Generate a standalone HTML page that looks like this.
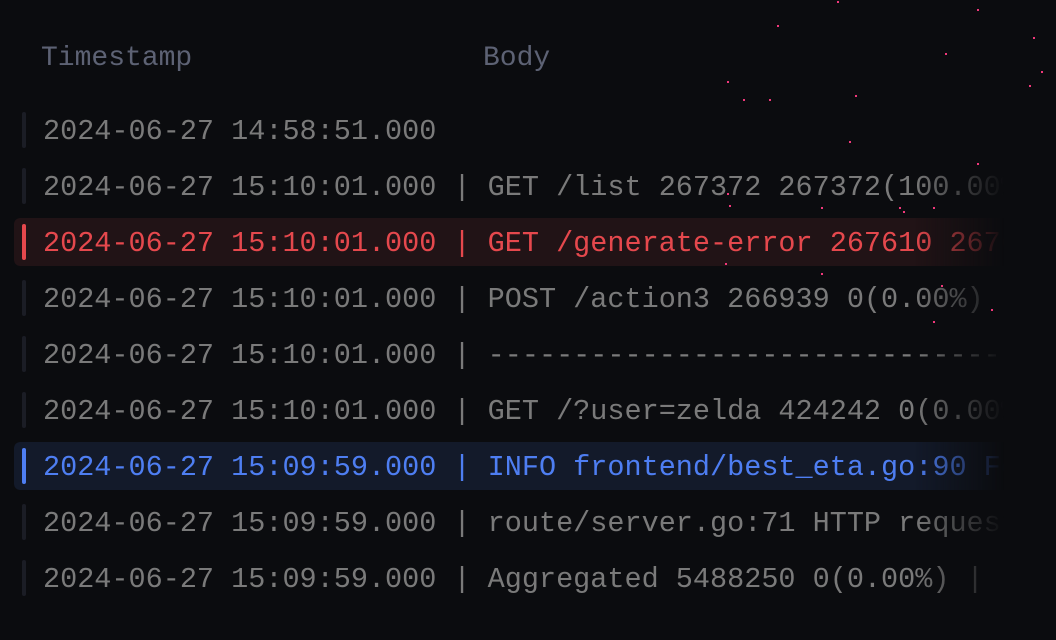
<!DOCTYPE html>
<html><head><meta charset="utf-8"><style>
html,body{margin:0;padding:0;background:#0b0c0f;width:1056px;height:640px;overflow:hidden}
body{position:relative;font-family:"Liberation Mono",monospace;font-size:28.5px}
.h{position:absolute;top:40px;color:#5d6274;line-height:38px;font-size:28px}
.row{position:absolute;left:14px;width:1000px;height:48px;border-radius:6px;
 -webkit-mask-image:linear-gradient(to right,#000 0,#000 900px,transparent 990px);mask-image:linear-gradient(to right,#000 0,#000 900px,transparent 990px)}
.row .bar{position:absolute;left:8px;top:6px;width:4px;height:36px;border-radius:2px;background:#1b1d25}
.row .t{position:absolute;left:29px;top:2px;line-height:48px;white-space:pre;color:#7a7a7a}
.r{background:#211316}.r .bar{background:#e5484d}.r .t{color:#e5484d}
.b{background:#131a2a}.b .bar{background:#4e7ef2}.b .t{color:#4e7ef2}
.d{position:absolute;width:2px;height:2px;background:#f0387a}
</style></head><body>
<div class="h" style="left:41px">Timestamp</div>
<div class="h" style="left:483px">Body</div>
<div class="row" style="top:106px"><div class="bar"></div><div class="t">2024-06-27 14:58:51.000</div></div>
<div class="row" style="top:162px"><div class="bar"></div><div class="t">2024-06-27 15:10:01.000 | GET /list 267372 267372(100.00%)</div></div>
<div class="row r" style="top:218px"><div class="bar"></div><div class="t">2024-06-27 15:10:01.000 | GET /generate-error 267610 267610</div></div>
<div class="row" style="top:274px"><div class="bar"></div><div class="t">2024-06-27 15:10:01.000 | POST /action3 266939 0(0.00%) |</div></div>
<div class="row" style="top:330px"><div class="bar"></div><div class="t">2024-06-27 15:10:01.000 | ----------------------------------</div></div>
<div class="row" style="top:386px"><div class="bar"></div><div class="t">2024-06-27 15:10:01.000 | GET /?user=zelda 424242 0(0.00%)</div></div>
<div class="row b" style="top:442px"><div class="bar"></div><div class="t">2024-06-27 15:09:59.000 | INFO frontend/best_eta.go:90 Found</div></div>
<div class="row" style="top:498px"><div class="bar"></div><div class="t">2024-06-27 15:09:59.000 | route/server.go:71 HTTP request</div></div>
<div class="row" style="top:554px"><div class="bar"></div><div class="t">2024-06-27 15:09:59.000 | Aggregated 5488250 0(0.00%) |</div></div>
<div class="d" style="left:837px;top:1px"></div><div class="d" style="left:977px;top:9px"></div>
<div class="d" style="left:777px;top:25px"></div><div class="d" style="left:1033px;top:37px"></div>
<div class="d" style="left:945px;top:53px"></div><div class="d" style="left:1041px;top:71px"></div>
<div class="d" style="left:727px;top:81px"></div><div class="d" style="left:1029px;top:85px"></div>
<div class="d" style="left:743px;top:99px"></div><div class="d" style="left:769px;top:99px"></div>
<div class="d" style="left:855px;top:95px"></div><div class="d" style="left:849px;top:141px"></div>
<div class="d" style="left:977px;top:163px"></div><div class="d" style="left:727px;top:193px"></div>
<div class="d" style="left:729px;top:205px"></div><div class="d" style="left:821px;top:207px"></div>
<div class="d" style="left:899px;top:207px"></div><div class="d" style="left:903px;top:211px"></div>
<div class="d" style="left:933px;top:207px"></div><div class="d" style="left:725px;top:263px"></div>
<div class="d" style="left:821px;top:273px"></div><div class="d" style="left:941px;top:285px"></div>
<div class="d" style="left:991px;top:309px"></div><div class="d" style="left:933px;top:321px"></div>
</body></html>
